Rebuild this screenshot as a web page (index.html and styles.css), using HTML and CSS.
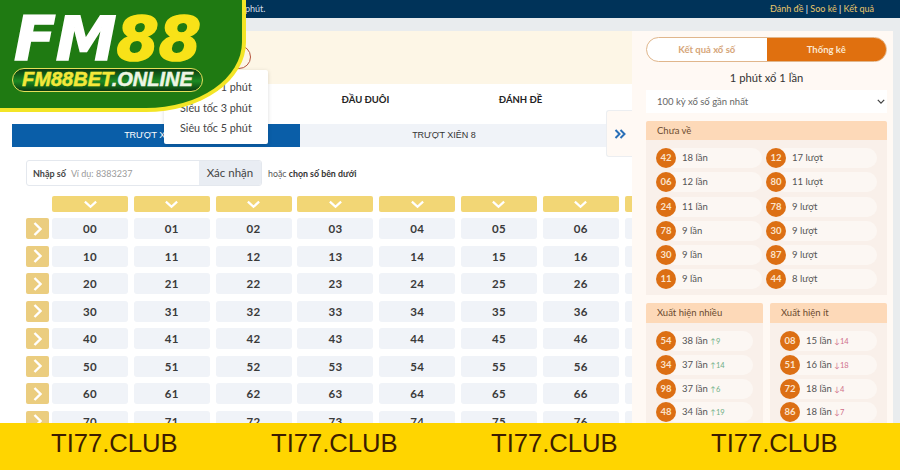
FILE: index.html
```html
<!DOCTYPE html>
<html lang="en">
<head>
  <meta charset="UTF-8">
  <title>FM88 | Xổ số</title>
  <link rel="stylesheet" href="styles.css">
</head>
<body>
  <div class="page">
    <div class="topbar">
      <span class="notice">phút.</span>
      <span class="links"><a>Đánh đề</a> | <a>Soo kê</a> | <a>Kết quả</a></span>
    </div>
    <div class="strip"></div>
    <div class="main">
      <div class="content">
        <div class="banner"><span class="round"></span></div>
        <div class="game-tabs">
          <span>ĐẦU ĐUÔI</span>
          <span>ĐÁNH ĐỀ</span>
        </div>
        <div class="sub-tabs">
          <span class="sub-tab active">TRƯỢT XIÊN 4</span>
          <span class="sub-tab">TRƯỢT XIÊN 8</span>
        </div>
        <div class="picker">
          <div class="number-box">
            <b>Nhập số</b>
            <span class="hint">Ví dụ: 8383237</span>
            <span class="confirm">Xác nhận</span>
          </div>
          <span class="or">hoặc <b>chọn số bên dưới</b></span>
        </div>
        <div class="board">
          <div class="row">
            <span class="corner"></span>
            <span class="col-head"><svg viewBox="0 0 16 9"><path d="M2 1.5l6 5.5 6-5.5"/></svg></span>
            <span class="col-head"><svg viewBox="0 0 16 9"><path d="M2 1.5l6 5.5 6-5.5"/></svg></span>
            <span class="col-head"><svg viewBox="0 0 16 9"><path d="M2 1.5l6 5.5 6-5.5"/></svg></span>
            <span class="col-head"><svg viewBox="0 0 16 9"><path d="M2 1.5l6 5.5 6-5.5"/></svg></span>
            <span class="col-head"><svg viewBox="0 0 16 9"><path d="M2 1.5l6 5.5 6-5.5"/></svg></span>
            <span class="col-head"><svg viewBox="0 0 16 9"><path d="M2 1.5l6 5.5 6-5.5"/></svg></span>
            <span class="col-head"><svg viewBox="0 0 16 9"><path d="M2 1.5l6 5.5 6-5.5"/></svg></span>
            <span class="col-head"></span>
          </div>
          <div class="row">
            <span class="row-head"><svg viewBox="0 0 9 16"><path d="M1.5 2l6 6-6 6"/></svg></span>
            <span class="cell">00</span><span class="cell">01</span><span class="cell">02</span><span class="cell">03</span><span class="cell">04</span><span class="cell">05</span><span class="cell">06</span><span class="cell"></span>
          </div>
          <div class="row">
            <span class="row-head"><svg viewBox="0 0 9 16"><path d="M1.5 2l6 6-6 6"/></svg></span>
            <span class="cell">10</span><span class="cell">11</span><span class="cell">12</span><span class="cell">13</span><span class="cell">14</span><span class="cell">15</span><span class="cell">16</span><span class="cell"></span>
          </div>
          <div class="row">
            <span class="row-head"><svg viewBox="0 0 9 16"><path d="M1.5 2l6 6-6 6"/></svg></span>
            <span class="cell">20</span><span class="cell">21</span><span class="cell">22</span><span class="cell">23</span><span class="cell">24</span><span class="cell">25</span><span class="cell">26</span><span class="cell"></span>
          </div>
          <div class="row">
            <span class="row-head"><svg viewBox="0 0 9 16"><path d="M1.5 2l6 6-6 6"/></svg></span>
            <span class="cell">30</span><span class="cell">31</span><span class="cell">32</span><span class="cell">33</span><span class="cell">34</span><span class="cell">35</span><span class="cell">36</span><span class="cell"></span>
          </div>
          <div class="row">
            <span class="row-head"><svg viewBox="0 0 9 16"><path d="M1.5 2l6 6-6 6"/></svg></span>
            <span class="cell">40</span><span class="cell">41</span><span class="cell">42</span><span class="cell">43</span><span class="cell">44</span><span class="cell">45</span><span class="cell">46</span><span class="cell"></span>
          </div>
          <div class="row">
            <span class="row-head"><svg viewBox="0 0 9 16"><path d="M1.5 2l6 6-6 6"/></svg></span>
            <span class="cell">50</span><span class="cell">51</span><span class="cell">52</span><span class="cell">53</span><span class="cell">54</span><span class="cell">55</span><span class="cell">56</span><span class="cell"></span>
          </div>
          <div class="row">
            <span class="row-head"><svg viewBox="0 0 9 16"><path d="M1.5 2l6 6-6 6"/></svg></span>
            <span class="cell">60</span><span class="cell">61</span><span class="cell">62</span><span class="cell">63</span><span class="cell">64</span><span class="cell">65</span><span class="cell">66</span><span class="cell"></span>
          </div>
          <div class="row">
            <span class="row-head"><svg viewBox="0 0 9 16"><path d="M1.5 2l6 6-6 6"/></svg></span>
            <span class="cell">70</span><span class="cell">71</span><span class="cell">72</span><span class="cell">73</span><span class="cell">74</span><span class="cell">75</span><span class="cell">76</span><span class="cell"></span>
          </div>
        </div>
      </div>

      <div class="sidebar">
        <div class="switch">
          <span>Kết quả xổ số</span>
          <span class="on">Thống kê</span>
        </div>
        <div class="side-title">1 phút xổ 1 lần</div>
        <div class="select-box">100 kỳ xổ số gần nhất
          <svg viewBox="0 0 10 6"><path d="M1 1l4 4 4-4"/></svg>
        </div>

        <div class="panel">
          <div class="panel-head">Chưa về</div>
          <div class="panel-body two-cols">
            <div class="stat"><i>42</i>18 lần</div><div class="stat"><i>12</i>17 lượt</div>
            <div class="stat"><i>06</i>12 lần</div><div class="stat"><i>80</i>11 lượt</div>
            <div class="stat"><i>24</i>11 lần</div><div class="stat"><i>78</i>9 lượt</div>
            <div class="stat"><i>78</i>9 lần</div><div class="stat"><i>30</i>9 lượt</div>
            <div class="stat"><i>30</i>9 lần</div><div class="stat"><i>87</i>9 lượt</div>
            <div class="stat"><i>11</i>9 lần</div><div class="stat"><i>44</i>8 lượt</div>
          </div>
        </div>

        <div class="panel-pair">
          <div class="panel">
            <div class="panel-head">Xuất hiện nhiều</div>
            <div class="panel-body">
              <div class="stat"><i>54</i>38 lần <em class="up">↑9</em></div>
              <div class="stat"><i>34</i>37 lần <em class="up">↑14</em></div>
              <div class="stat"><i>98</i>37 lần <em class="up">↑6</em></div>
              <div class="stat"><i>48</i>34 lần <em class="up">↑19</em></div>
            </div>
          </div>
          <div class="panel">
            <div class="panel-head">Xuất hiện ít</div>
            <div class="panel-body">
              <div class="stat"><i>08</i>15 lần <em class="down">↓14</em></div>
              <div class="stat"><i>51</i>16 lần <em class="down">↓18</em></div>
              <div class="stat"><i>72</i>18 lần <em class="down">↓4</em></div>
              <div class="stat"><i>86</i>18 lần <em class="down">↓7</em></div>
            </div>
          </div>
        </div>
      </div>
    </div>

    <!-- things that sit on top of the page -->
    <div class="toggle-side"><svg viewBox="0 0 12 10"><path d="M1.5 1l4 4-4 4M6.5 1l4 4-4 4"/></svg></div>
    <ul class="speed-menu">
      <li>Siêu tốc 1 phút</li>
      <li>Siêu tốc 3 phút</li>
      <li>Siêu tốc 5 phút</li>
    </ul>
    <div class="logo">
      <div class="logo-word">FM<span>88</span></div>
      <div class="logo-pill"><span>FM88BET</span>.ONLINE</div>
    </div>
    <div class="band">
      <span>TI77.CLUB</span><span>TI77.CLUB</span><span>TI77.CLUB</span><span>TI77.CLUB</span>
    </div>
  </div>
</body>
</html>
```

FILE: styles.css
```css
* { box-sizing: border-box; }
html, body { margin: 0; padding: 0; }
body { font-family: Lato, "Noto Sans", sans-serif; color: #333; background: #fff; }
.page { position: relative; width: 900px; height: 470px; overflow: hidden; background: #fff; }

.topbar { height: 18px; background: #003359; color: #e8c56a; font-size: 9px; line-height: 18px; display: flex; justify-content: space-between; padding: 0 26px 0 245px; }
.notice { color: #d5dde5; }
.links { color: #fff; }
.links a { color: #e8c56a; }
.strip { height: 13px; background: #e9ecee; }

.main { display: flex; height: 439px; background: #e9ecee; }
.content { width: 632px; background: #fff; overflow: hidden; flex: none; }
.banner { height: 53px; background: #fdf6e6; padding: 14px 0 0 227px; }
.round { display: block; width: 24px; height: 24px; border: 1px solid #b5533c; border-radius: 50%; }
.game-tabs { height: 40px; padding: 0 0 10px 288px; display: flex; align-items: center; font-size: 9.5px; font-weight: 700; color: #222; }
.game-tabs span { width: 155px; text-align: center; }

.sub-tabs { display: flex; margin-left: 12px; height: 23px; background: #f0f3f8; font-family: "Liberation Sans", sans-serif; font-size: 9px; line-height: 23px; text-align: center; }
.sub-tab { flex: none; width: 288px; color: #333; }
.sub-tab.active { background: #0a5ea8; color: #fff; }

.picker { display: flex; align-items: center; gap: 6px; padding: 13px 0 0 26px; }
.number-box { width: 236px; height: 26px; border: 1px solid #e4e8ee; border-radius: 3px; display: flex; align-items: center; padding-left: 6px; font-size: 9px; overflow: hidden; }
.number-box b { color: #444; margin-right: 5px; }
.hint { color: #9a9a9a; flex: 1; }
.confirm { width: 62px; height: 100%; background: #e9edf3; color: #444; font-size: 11.5px; line-height: 24px; text-align: center; }
.or { font-size: 8.8px; color: #555; }
.or b { color: #333; }

.board { padding: 10px 0 0 26px; width: 760px; }
.row { display: flex; gap: 5.8px; margin-bottom: 6.5px; height: 21px; }
.row:first-child { height: 16px; margin-bottom: 6px; }
.corner, .row-head { flex: none; width: 23px; margin-right: -2.8px; }
.row-head { background: #ebcd7f; border-radius: 2px; display: flex; align-items: center; justify-content: center; }
.row-head svg { width: 9px; height: 16px; }
.col-head { flex: none; width: 76px; background: #f2d675; border-radius: 2px; display: flex; align-items: center; justify-content: center; }
.col-head svg { width: 15px; height: 9px; }
.row svg path { fill: none; stroke: #fff; stroke-width: 2.4; }
.cell { flex: none; width: 76px; background: #f0f3f8; border-radius: 3px; font-size: 11.5px; font-weight: 700; color: #3a3a3a; text-align: center; line-height: 21px; letter-spacing: .3px; }

.sidebar { width: 261px; flex: none; background: #fff9f4; padding: 6px 6px 0 14px; }
.switch { display: flex; height: 25px; border: 1px solid #e0b68c; border-radius: 13px; overflow: hidden; font-size: 9.5px; font-weight: 700; line-height: 23px; text-align: center; background: #fff; color: #d6a679; }
.switch span { flex: 1; }
.switch .on { background: #e0700f; color: #fbe6cf; }
.side-title { font-size: 11.2px; text-align: center; color: #333; margin-top: 8px; height: 19px; line-height: 15px; }
.select-box { height: 23px; margin-top: 1px; background: #fff; font-size: 9.5px; line-height: 23px; color: #666; padding-left: 11px; display: flex; justify-content: space-between; align-items: center; padding-right: 2px; }
.select-box svg { width: 8px; height: 5px; fill: none; stroke: #444; stroke-width: 1.6; }

.panel { margin-top: 8px; }
.panel-head { height: 19px; background: #fdd9b8; border-radius: 2px 2px 0 0; font-size: 9.5px; line-height: 19px; padding-left: 11px; color: #6b4a2f; }
.panel-body { background: #f9f0ea; padding: 8px 10px 5px; display: grid; row-gap: 3.8px; }
.two-cols { grid-template-columns: 106px 111px; column-gap: 4px; height: 155px; }
.stat { position: relative; height: 20px; margin-left: 9px; padding-left: 17px; background: #fcf7f3; border-radius: 10px; font-size: 9.5px; line-height: 20px; color: #555; white-space: nowrap; }
.stat i { position: absolute; left: -9px; top: 0; width: 20px; height: 20px; border-radius: 50%; background: #dc6f14; color: #fbe3cc; font-style: normal; font-size: 9.5px; font-weight: 700; text-align: center; }
.stat em { font-style: normal; font-size: 7.5px; }
.up { color: #6fae85; }
.down { color: #d0708a; }
.panel-pair { display: grid; grid-template-columns: 117px 117px; column-gap: 7px; }
.panel-pair .panel-head { height: 20px; line-height: 20px; }
.panel-pair .panel-body { padding-top: 8px; }

.toggle-side { position: absolute; left: 606px; top: 110px; width: 26px; height: 47px; background: #fff9f4; border: 1px solid #eceef1; border-right: 0; border-radius: 3px 0 0 3px; display: flex; align-items: center; justify-content: center; }
.toggle-side svg { width: 12px; height: 10px; fill: none; stroke: #2a70b8; stroke-width: 2; }

.speed-menu { position: absolute; left: 164px; top: 70px; width: 104px; height: 74px; margin: 0; padding: 7px 0 0 16px; list-style: none; background: #fff; border-radius: 2px; box-shadow: 0 1px 4px rgba(0,0,0,.15); font-size: 10.8px; color: #444; }
.speed-menu li { height: 20.5px; line-height: 20.5px; }

.logo { position: absolute; left: 0; top: 0; width: 246px; height: 112px; background: #1f7a12; border: solid #f3e526; border-width: 0 4px 4px 0; border-bottom-right-radius: 100px 70px; padding: 13px 0 0 14px; }
.logo-word { font-family: "DejaVu Sans", sans-serif; font-weight: 700; font-style: italic; font-size: 61px; line-height: 52px; color: #fff; -webkit-text-stroke: 1.6px currentColor; }
.logo-word span { color: #f8e218; }
.logo-pill { width: 191px; height: 24px; margin: 3px 0 0 -2px; background: linear-gradient(180deg, #0b3a10 0%, #1c8a22 55%, #0b3a10 100%); border: 1.5px solid #e6e05a; border-radius: 12px; font-family: "Liberation Sans", sans-serif; font-weight: 700; font-style: italic; font-size: 20px; line-height: 21px; text-align: center; color: #eef5e4; white-space: nowrap; -webkit-text-stroke: .5px currentColor; }
.logo-pill span { color: #f4e83a; }

.band { position: absolute; left: 0; bottom: 0; width: 900px; height: 47px; background: #ffd500; display: flex; padding-left: 51px; color: #3d1d00; font-family: "Liberation Sans", sans-serif; font-size: 25.6px; line-height: 41px; }
.band span { width: 220px; flex: none; }
```
